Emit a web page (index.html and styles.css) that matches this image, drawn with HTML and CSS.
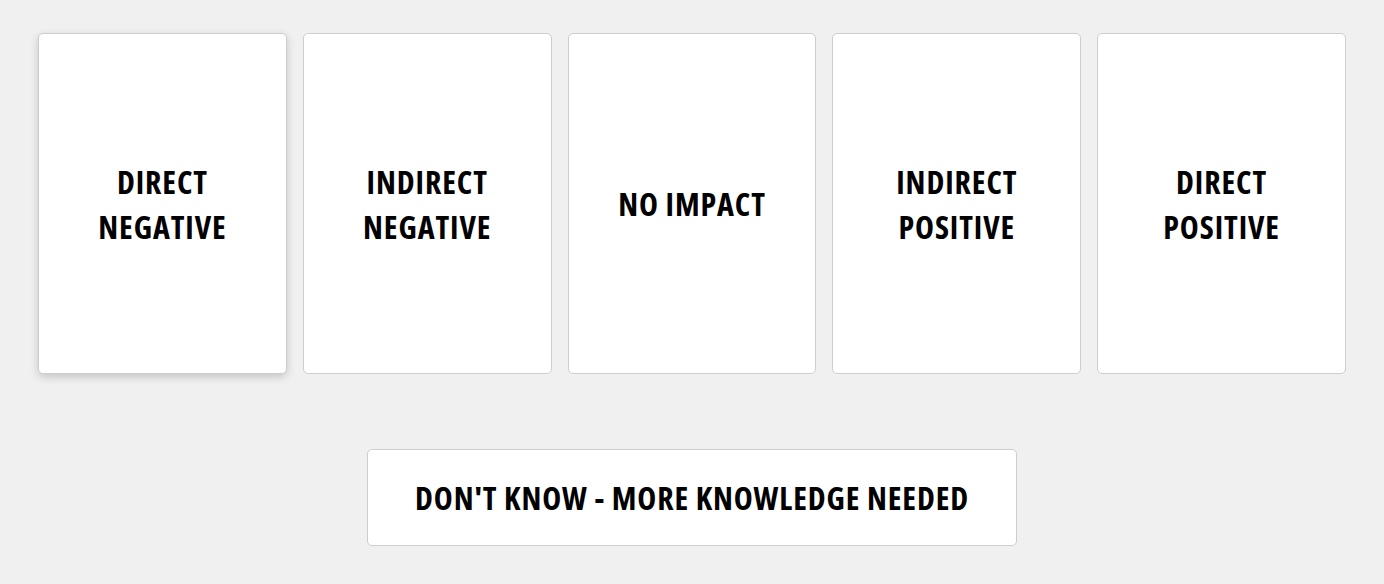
FILE: index.html
```html
<!DOCTYPE html>
<html lang="en">
<head>
<meta charset="utf-8">
<title>Impact</title>
<link rel="stylesheet" href="styles.css">
</head>
<body>
<main class="board">
  <div class="cards">
    <div class="card card-active"><span>DIRECT<br>NEGATIVE</span></div>
    <div class="card"><span>INDIRECT<br>NEGATIVE</span></div>
    <div class="card"><span>NO IMPACT</span></div>
    <div class="card"><span>INDIRECT<br>POSITIVE</span></div>
    <div class="card"><span>DIRECT<br>POSITIVE</span></div>
  </div>
  <div class="extra">
    <div class="wide">DON'T KNOW - MORE KNOWLEDGE NEEDED</div>
  </div>
</main>
</body>
</html>
```
FILE: styles.css
```css
html, body {
  margin: 0;
  padding: 0;
  background: #f0f0f0;
}
body {
  font-family: "Open Sans", "Liberation Sans", sans-serif;
  font-stretch: 75%;
  font-weight: 700;
  color: #000;
  letter-spacing: 0.9px;
}
.board {
  padding: 33px 38px 0 38px;
}
.cards {
  display: grid;
  grid-template-columns: repeat(5, 1fr);
  gap: 16px;
}
.card {
  height: 341px;
  box-sizing: border-box;
  background: #fff;
  border: 1px solid #cdcdcd;
  border-radius: 5px;
  display: flex;
  align-items: center;
  justify-content: center;
  text-align: center;
  font-size: 32px;
  line-height: 45px;
}
.card-active {
  box-shadow: 0 3px 8px rgba(0,0,0,0.18);
}
.extra {
  display: flex;
  justify-content: center;
  margin-top: 75px;
}
.wide {
  width: 650px;
  height: 97px;
  box-sizing: border-box;
  background: #fff;
  border: 1px solid #cdcdcd;
  border-radius: 5px;
  display: flex;
  align-items: center;
  justify-content: center;
  font-size: 32px;
}
```
